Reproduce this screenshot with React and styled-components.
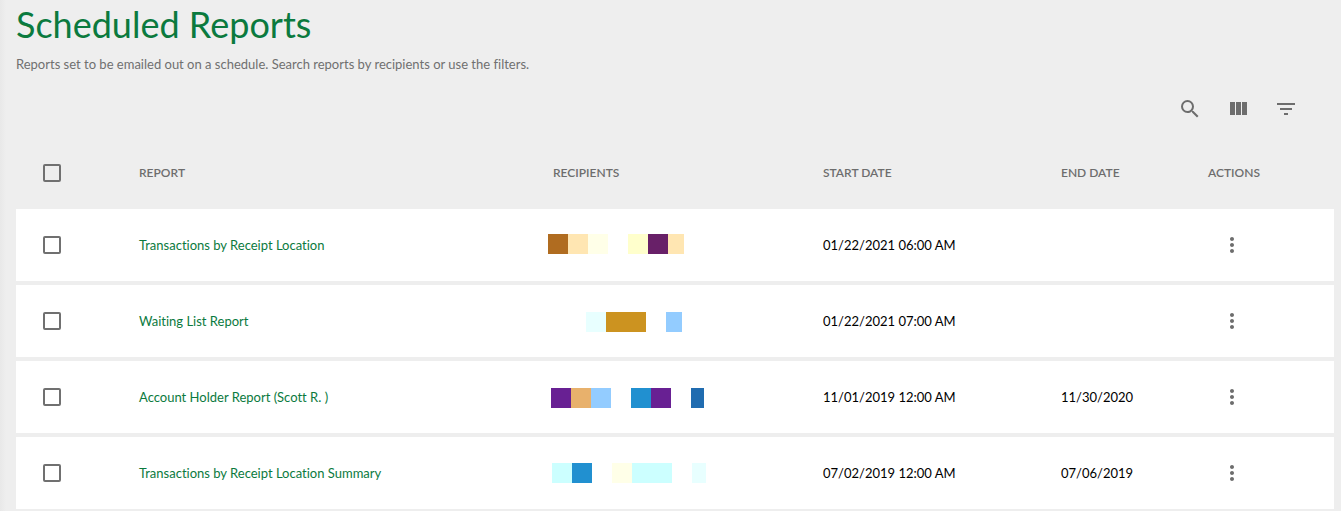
import React from 'react';
import styled, { createGlobalStyle } from 'styled-components';
import { MdFilterList, MdMoreVert, MdSearch } from 'react-icons/md';

const GlobalStyle = createGlobalStyle`
  *,
  *::before,
  *::after {
    box-sizing: border-box;
  }

  body {
    margin: 0;
    background-color: #eee;
    color: #000;
    font-family: Lato, 'Liberation Sans', sans-serif;
    font-size: 13px;
    font-variant-ligatures: none;
  }
`;

const Page = styled.main`
  padding: 4px 7px 0 16px;
  background: linear-gradient(to right, #e8e8e8, #eee 6px);
`;

const Title = styled.h1`
  margin: 0;
  color: #0b7a3e;
  font-size: 36px;
  font-weight: 400;
  line-height: 40px;
`;

const Description = styled.p`
  margin: 10px 0 0;
  color: #707070;
  line-height: 20px;
`;

const Toolbar = styled.div`
  display: flex;
  justify-content: flex-end;
  padding: 11px 24px 4px 0;
`;

const IconButton = styled.button`
  display: flex;
  align-items: center;
  justify-content: center;
  width: 48px;
  height: 48px;
  padding: 0;
  border: 0;
  border-radius: 50%;
  background: transparent;
  color: #6d6d6d;
  cursor: pointer;

  &:hover {
    background-color: rgba(0, 0, 0, 0.04);
  }
`;

const Table = styled.table`
  width: 100%;
  table-layout: fixed;
  border-spacing: 0 4px;
  margin-top: -4px;
`;

const Column = styled.col`
  width: ${({ $width }) => $width}px;
`;

const HeadCell = styled.th`
  height: 68px;
  padding: 4px 16px 0;
  color: #6d6d6d;
  font-size: 12px;
  font-weight: 600;
  line-height: 20px;
  text-align: left;
  text-transform: uppercase;
`;

const Cell = styled.td`
  height: 72px;
  padding: 0 16px;
  background-color: #fff;
  line-height: 20px;
`;

const RecipientsCell = styled(Cell)`
  padding-left: 11px;
`;

const Checkbox = styled.input`
  display: block;
  appearance: none;
  width: 18px;
  height: 18px;
  margin: 0 0 0 11px;
  border: 2px solid #707070;
  border-radius: 2px;
  cursor: pointer;

  &:checked {
    border-color: #0b7a3e;
    background-color: #0b7a3e;
  }
`;

const ReportLink = styled.a`
  color: #0b7a3e;
  text-decoration: none;

  &:hover {
    text-decoration: underline;
  }
`;

const Mosaic = styled.svg`
  display: block;
`;

const columns = [
  { label: 'Report', width: 414 },
  { label: 'Recipients', width: 270 },
  { label: 'Start Date', width: 238 },
  { label: 'End Date', width: 147 },
  { label: 'Actions', width: 142 },
];

// blocks: [x, width, color]
const reports = [
  {
    id: 1,
    name: 'Transactions by Receipt Location',
    start: '01/22/2021 06:00 AM',
    end: '',
    top: 0,
    blocks: [
      [0, 20, '#b06c20'],
      [20, 20, '#ffe6b2'],
      [40, 20, '#ffffe8'],
      [80, 20, '#ffffcc'],
      [100, 20, '#682068'],
      [120, 16, '#ffe6b2'],
    ],
  },
  {
    id: 2,
    name: 'Waiting List Report',
    start: '01/22/2021 07:00 AM',
    end: '',
    top: 2,
    blocks: [
      [38, 20, '#e8ffff'],
      [58, 40, '#cc9320'],
      [118, 16, '#93ccff'],
    ],
  },
  {
    id: 3,
    name: 'Account Holder Report (Scott R. )',
    start: '11/01/2019 12:00 AM',
    end: '11/30/2020',
    top: 2,
    blocks: [
      [3, 20, '#682093'],
      [23, 20, '#e8b16c'],
      [43, 20, '#93ccff'],
      [83, 20, '#2190d0'],
      [103, 20, '#682093'],
      [143, 13, '#206cb0'],
    ],
  },
  {
    id: 4,
    name: 'Transactions by Receipt Location Summary',
    start: '07/02/2019 12:00 AM',
    end: '07/06/2019',
    top: 1,
    blocks: [
      [4, 20, '#ccffff'],
      [24, 20, '#2190d0'],
      [64, 20, '#ffffe8'],
      [84, 40, '#ccffff'],
      [144, 14, '#e8ffff'],
    ],
  },
];

function ColumnsIcon() {
  return (
    <svg width='24' height='24' viewBox='0 0 24 24' fill='currentColor'>
      <path d='M10 18h5V5h-5v13zm-6 0h5V5H4v13zM16 5v13h5V5h-5z' />
    </svg>
  );
}

function ReportRow({ report }) {
  return (
    <tr>
      <Cell>
        <Checkbox type='checkbox' aria-label={`Select ${report.name}`} />
      </Cell>
      <Cell>
        <ReportLink href='#'>{report.name}</ReportLink>
      </Cell>
      <RecipientsCell>
        <Mosaic width='160' height='22' aria-hidden='true'>
          {report.blocks.map(([x, width, color]) => (
            <rect key={x} x={x} y={report.top} width={width} height='20' fill={color} />
          ))}
        </Mosaic>
      </RecipientsCell>
      <Cell>{report.start}</Cell>
      <Cell>{report.end}</Cell>
      <Cell>
        <IconButton type='button' aria-label={`Actions for ${report.name}`}>
          <MdMoreVert size={24} />
        </IconButton>
      </Cell>
    </tr>
  );
}

function App() {
  return (
    <>
      <GlobalStyle />
      <Page>
        <Title>Scheduled Reports</Title>
        <Description>
          Reports set to be emailed out on a schedule. Search reports by recipients or use the filters.
        </Description>
        <Toolbar>
          <IconButton type='button' aria-label='Search'>
            <MdSearch size={24} />
          </IconButton>
          <IconButton type='button' aria-label='View columns'>
            <ColumnsIcon />
          </IconButton>
          <IconButton type='button' aria-label='Filter table'>
            <MdFilterList size={24} />
          </IconButton>
        </Toolbar>
        <Table>
          <colgroup>
            <Column $width={107} />
            {columns.map((column) => (
              <Column key={column.label} $width={column.width} />
            ))}
          </colgroup>
          <thead>
            <tr>
              <HeadCell>
                <Checkbox type='checkbox' aria-label='Select all reports' />
              </HeadCell>
              {columns.map((column) => (
                <HeadCell key={column.label} scope='col'>
                  {column.label}
                </HeadCell>
              ))}
            </tr>
          </thead>
          <tbody>
            {reports.map((report) => (
              <ReportRow key={report.id} report={report} />
            ))}
          </tbody>
        </Table>
      </Page>
    </>
  );
}

export default App;
